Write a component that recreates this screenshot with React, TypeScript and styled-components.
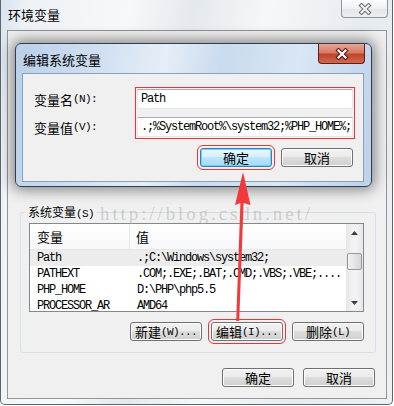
import styled, { createGlobalStyle } from "styled-components";

const GlobalStyle = createGlobalStyle`
  html, body {
    margin: 0;
    padding: 0;
    background: #fff;
  }
  body {
    font-family: "Noto Sans CJK SC", "Liberation Sans", sans-serif;
    font-size: 12px;
    color: #000;
  }
`;

const Screen = styled.div`
  position: relative;
  width: 394px;
  height: 406px;
  overflow: hidden;
  background: #fff;
`;

const Window = styled.div`
  box-sizing: border-box;
  width: 393px;
  height: 405px;
  display: flex;
  flex-direction: column;
  border: 1px solid #5d6670;
  border-top: none;
  border-radius: 0 0 5px 5px;
  background: linear-gradient(
    100deg,
    #d6e3ef 0%,
    #eef2f6 6%,
    #f7f8fa 28%,
    #e4e9ee 42%,
    #f6f7f9 58%,
    #e6ebf0 80%,
    #eef1f4 100%
  );
`;

const TitleBar = styled.div`
  height: 30px;
  flex-shrink: 0;
  display: flex;
  justify-content: space-between;
  align-items: flex-start;
`;

const Title = styled.div`
  padding: 8px 0 0 7px;
  font-size: 13px;
  line-height: 14px;
`;

const CloseButton = styled.div<{ $active?: boolean }>`
  box-sizing: border-box;
  width: 47px;
  height: ${({ $active }) => ($active ? 20 : 18)}px;
  margin-right: ${({ $active }) => ($active ? 6 : 4)}px;
  display: flex;
  align-items: center;
  justify-content: center;
  border: 1px solid ${({ $active }) => ($active ? "#5b1f16" : "#8c959e")};
  border-top: none;
  border-radius: 0 0 4px 4px;
  background: ${({ $active }) =>
    $active
      ? "linear-gradient(#e7a593 0%, #d77a66 45%, #c2432c 55%, #cf6a4f 100%)"
      : "linear-gradient(#fbfcfd 0%, #eef1f4 50%, #e2e6ea 55%, #eceff2 100%)"};
`;

const Client = styled.div`
  flex: 1;
  margin: 0 5px 5px 6px;
  display: flex;
  flex-direction: column;
  border: 1px solid #8e959c;
  background: #f0f0f0;
`;

const GroupBox = styled.div`
  margin: 181px 10px 0 12px;
  display: flex;
  flex-direction: column;
  border: 1px solid #d5dfe5;
  border-radius: 3px;
  padding-bottom: 11px;
`;

const GroupLegend = styled.div`
  align-self: flex-start;
  margin: -9px 0 0 5px;
  padding: 0 2px;
  height: 16px;
  line-height: 16px;
  background: #f0f0f0;
`;

const Latin = styled.span`
  font-family: "Liberation Mono", monospace;
  font-size: 11px;
  letter-spacing: -0.6px;
`;

const ListView = styled.div`
  box-sizing: border-box;
  height: 89px;
  margin: 3px 11px 0 8px;
  display: flex;
  border: 1px solid #828790;
  background: #fff;
  overflow: hidden;
`;

const Table = styled.div`
  flex: 1;
  display: flex;
  flex-direction: column;
  overflow: hidden;
`;

const HeaderRow = styled.div`
  height: 25px;
  flex-shrink: 0;
  display: flex;
  border-bottom: 1px solid #e5e5e5;
  background: linear-gradient(#ffffff, #f7f8fa);
  font-size: 13px;
`;

const HeaderCell = styled.div<{ $w?: number }>`
  box-sizing: border-box;
  width: ${({ $w }) => ($w ? `${$w}px` : "auto")};
  flex: ${({ $w }) => ($w ? "none" : "1")};
  display: flex;
  align-items: center;
  padding-left: ${({ $w }) => ($w ? 7 : 6)}px;
  border-right: ${({ $w }) => ($w ? "1px solid #e3e8ee" : "none")};
`;

const Row = styled.div<{ $selected?: boolean }>`
  height: 16px;
  flex-shrink: 0;
  display: flex;
  align-items: center;
  background: ${({ $selected }) => ($selected ? "#ececec" : "transparent")};
  font-family: "Liberation Mono", monospace;
  font-size: 12px;
  letter-spacing: -1.2px;
  white-space: nowrap;
`;

const Cell = styled.div<{ $w?: number }>`
  box-sizing: border-box;
  width: ${({ $w }) => ($w ? `${$w}px` : "auto")};
  flex: ${({ $w }) => ($w ? "none" : "1")};
  padding-left: 7px;
  overflow: hidden;
`;

const ScrollBar = styled.div`
  width: 17px;
  flex-shrink: 0;
  display: flex;
  flex-direction: column;
  background: linear-gradient(90deg, #e6e6e6, #f3f3f3 40%, #f3f3f3 60%, #e6e6e6);
`;

const ScrollArrow = styled.div`
  height: 17px;
  display: flex;
  align-items: center;
  justify-content: center;
`;

const ScrollTrack = styled.div`
  flex: 1;
  padding: 12px 1px 0 1px;
`;

const Thumb = styled.div`
  height: 15px;
  border: 1px solid #979797;
  border-radius: 2px;
  background: linear-gradient(90deg, #f2f2f2, #e4e4e4 50%, #d6d6d6);
`;

const ButtonRow = styled.div<{ $top: number; $right: number }>`
  display: flex;
  justify-content: flex-end;
  gap: 9px;
  margin-top: ${({ $top }) => $top}px;
  padding-right: ${({ $right }) => $right}px;
`;

const Button = styled.div<{ $primary?: boolean; $marked?: boolean }>`
  box-sizing: border-box;
  width: 72px;
  height: 19px;
  display: flex;
  align-items: center;
  justify-content: center;
  border: 1px solid ${({ $primary }) => ($primary ? "#3c7fb1" : "#707070")};
  border-radius: 3px;
  background: ${({ $primary }) =>
    $primary
      ? "linear-gradient(#eaf6fd 0%, #d9f0fc 45%, #bee6fd 50%, #a7d9f5 100%)"
      : "linear-gradient(#f2f2f2 0%, #ebebeb 45%, #dddddd 50%, #cfcfcf 100%)"};
  box-shadow: ${({ $primary }) =>
    $primary ? "inset 0 0 0 1px #6fd2f6" : "inset 0 0 0 1px #fcfcfc"};
  font-size: 13px;
  white-space: nowrap;
  outline: ${({ $marked }) => ($marked ? "1px solid #ee3434" : "none")};
  outline-offset: 2px;
`;

const Dialog = styled.div`
  position: absolute;
  left: 15px;
  top: 43px;
  box-sizing: border-box;
  width: 357px;
  height: 144px;
  display: flex;
  flex-direction: column;
  border: 1px solid #2f3e50;
  border-radius: 6px;
  background: linear-gradient(
    100deg,
    #b9d0e9 0%,
    #d3e2f2 25%,
    #e6eef7 40%,
    #c9dbee 55%,
    #d9e6f4 75%,
    #bcd2ea 100%
  );
  box-shadow: 0 0 14px 3px rgba(0, 0, 0, 0.45);
`;

const DialogTitleBar = styled.div`
  height: 29px;
  flex-shrink: 0;
  display: flex;
  justify-content: space-between;
  align-items: flex-start;
`;

const DialogTitle = styled.div`
  padding: 9px 0 0 7px;
  font-size: 13px;
  line-height: 14px;
`;

const DialogClient = styled.div`
  flex: 1;
  margin: 0 7px 4px 6px;
  display: flex;
  flex-direction: column;
  border: 1px solid #8aa0b8;
  background: #f0f0f0;
  padding: 15px 0 0 11px;
`;

const FieldArea = styled.div`
  display: flex;
`;

const LabelColumn = styled.div`
  width: 103px;
  display: flex;
  flex-direction: column;
  gap: 8px;
`;

const Label = styled.div`
  height: 20px;
  display: flex;
  align-items: center;
  font-size: 13px;
`;

const InputColumn = styled.div`
  width: 216px;
  display: flex;
  flex-direction: column;
  gap: 8px;
  outline: 1px solid #ee3434;
  outline-offset: 1px;
`;

const TextBox = styled.div`
  box-sizing: border-box;
  height: 20px;
  display: flex;
  align-items: center;
  padding-left: 3px;
  border: 1px solid #e3e9ef;
  border-top-color: #abadb3;
  background: #fff;
  font-family: "Liberation Mono", monospace;
  font-size: 12px;
  letter-spacing: -1.2px;
  white-space: nowrap;
  overflow: hidden;
`;

const Watermark = styled.div`
  position: absolute;
  left: 100px;
  top: 203px;
  font-family: "Liberation Serif", serif;
  font-size: 19px;
  letter-spacing: 2.9px;
  color: rgba(170, 170, 170, 0.5);
  pointer-events: none;
  white-space: nowrap;
`;

const Overlay = styled.svg`
  position: absolute;
  left: 0;
  top: 0;
  pointer-events: none;
`;

function CloseGlyph({ active }: { active?: boolean }) {
  return (
    <svg width="16" height="12" viewBox="0 0 16 12">
      <path
        d="M4.5 2.5 L11.5 9.5 M11.5 2.5 L4.5 9.5"
        stroke={active ? "#4a1810" : "#6b6f74"}
        strokeWidth="4.2"
        strokeLinecap="square"
      />
      <path
        d="M4.5 2.5 L11.5 9.5 M11.5 2.5 L4.5 9.5"
        stroke={active ? "#ffffff" : "#f2f3f5"}
        strokeWidth="2.2"
        strokeLinecap="square"
      />
    </svg>
  );
}

const rows = [
  { name: "Path", value: ".;C:\\Windows\\system32;" },
  { name: "PATHEXT", value: ".COM;.EXE;.BAT;.CMD;.VBS;.VBE;...." },
  { name: "PHP_HOME", value: "D:\\PHP\\php5.5" },
  { name: "PROCESSOR_AR", value: "AMD64" },
];

export default function App() {
  return (
    <Screen>
      <GlobalStyle />
      <Window>
        <TitleBar>
          <Title>环境变量</Title>
          <CloseButton>
            <CloseGlyph />
          </CloseButton>
        </TitleBar>
        <Client>
          <GroupBox>
            <GroupLegend>
              系统变量<Latin>(S)</Latin>
            </GroupLegend>
            <ListView>
              <Table>
                <HeaderRow>
                  <HeaderCell $w={100}>变量</HeaderCell>
                  <HeaderCell>值</HeaderCell>
                </HeaderRow>
                {rows.map((r, i) => (
                  <Row key={r.name} $selected={i === 0}>
                    <Cell $w={100}>{r.name}</Cell>
                    <Cell>{r.value}</Cell>
                  </Row>
                ))}
              </Table>
              <ScrollBar>
                <ScrollArrow>
                  <svg width="7" height="4" viewBox="0 0 7 4">
                    <path d="M3.5 0 L7 4 L0 4 Z" fill="#3c3c3c" />
                  </svg>
                </ScrollArrow>
                <ScrollTrack>
                  <Thumb />
                </ScrollTrack>
                <ScrollArrow>
                  <svg width="7" height="4" viewBox="0 0 7 4">
                    <path d="M0 0 L7 0 L3.5 4 Z" fill="#3c3c3c" />
                  </svg>
                </ScrollArrow>
              </ScrollBar>
            </ListView>
            <ButtonRow $top={10} $right={11}>
              <Button>
                新建<Latin>(W)...</Latin>
              </Button>
              <Button $marked>
                编辑<Latin>(I)...</Latin>
              </Button>
              <Button>
                删除<Latin>(L)</Latin>
              </Button>
            </ButtonRow>
          </GroupBox>
          <ButtonRow $top={15} $right={11}>
            <Button>确定</Button>
            <Button>取消</Button>
          </ButtonRow>
        </Client>
      </Window>

      <Watermark>http://blog.csdn.net/</Watermark>

      <Dialog>
        <DialogTitleBar>
          <DialogTitle>编辑系统变量</DialogTitle>
          <CloseButton $active>
            <CloseGlyph active />
          </CloseButton>
        </DialogTitleBar>
        <DialogClient>
          <FieldArea>
            <LabelColumn>
              <Label>
                变量名<Latin>(N):</Latin>
              </Label>
              <Label>
                变量值<Latin>(V):</Latin>
              </Label>
            </LabelColumn>
            <InputColumn>
              <TextBox>Path</TextBox>
              <TextBox>.;%SystemRoot%\system32;%PHP_HOME%;</TextBox>
            </InputColumn>
          </FieldArea>
          <ButtonRow $top={11} $right={10}>
            <Button $primary $marked>
              确定
            </Button>
            <Button>取消</Button>
          </ButtonRow>
        </DialogClient>
      </Dialog>

      <Overlay width="394" height="406" viewBox="0 0 394 406">
        <polygon
          points="243,172 250.5,205 243.6,203 239.2,321 236.2,321 240.4,203 235,205"
          fill="#f23a3c"
        />
      </Overlay>
    </Screen>
  );
}
